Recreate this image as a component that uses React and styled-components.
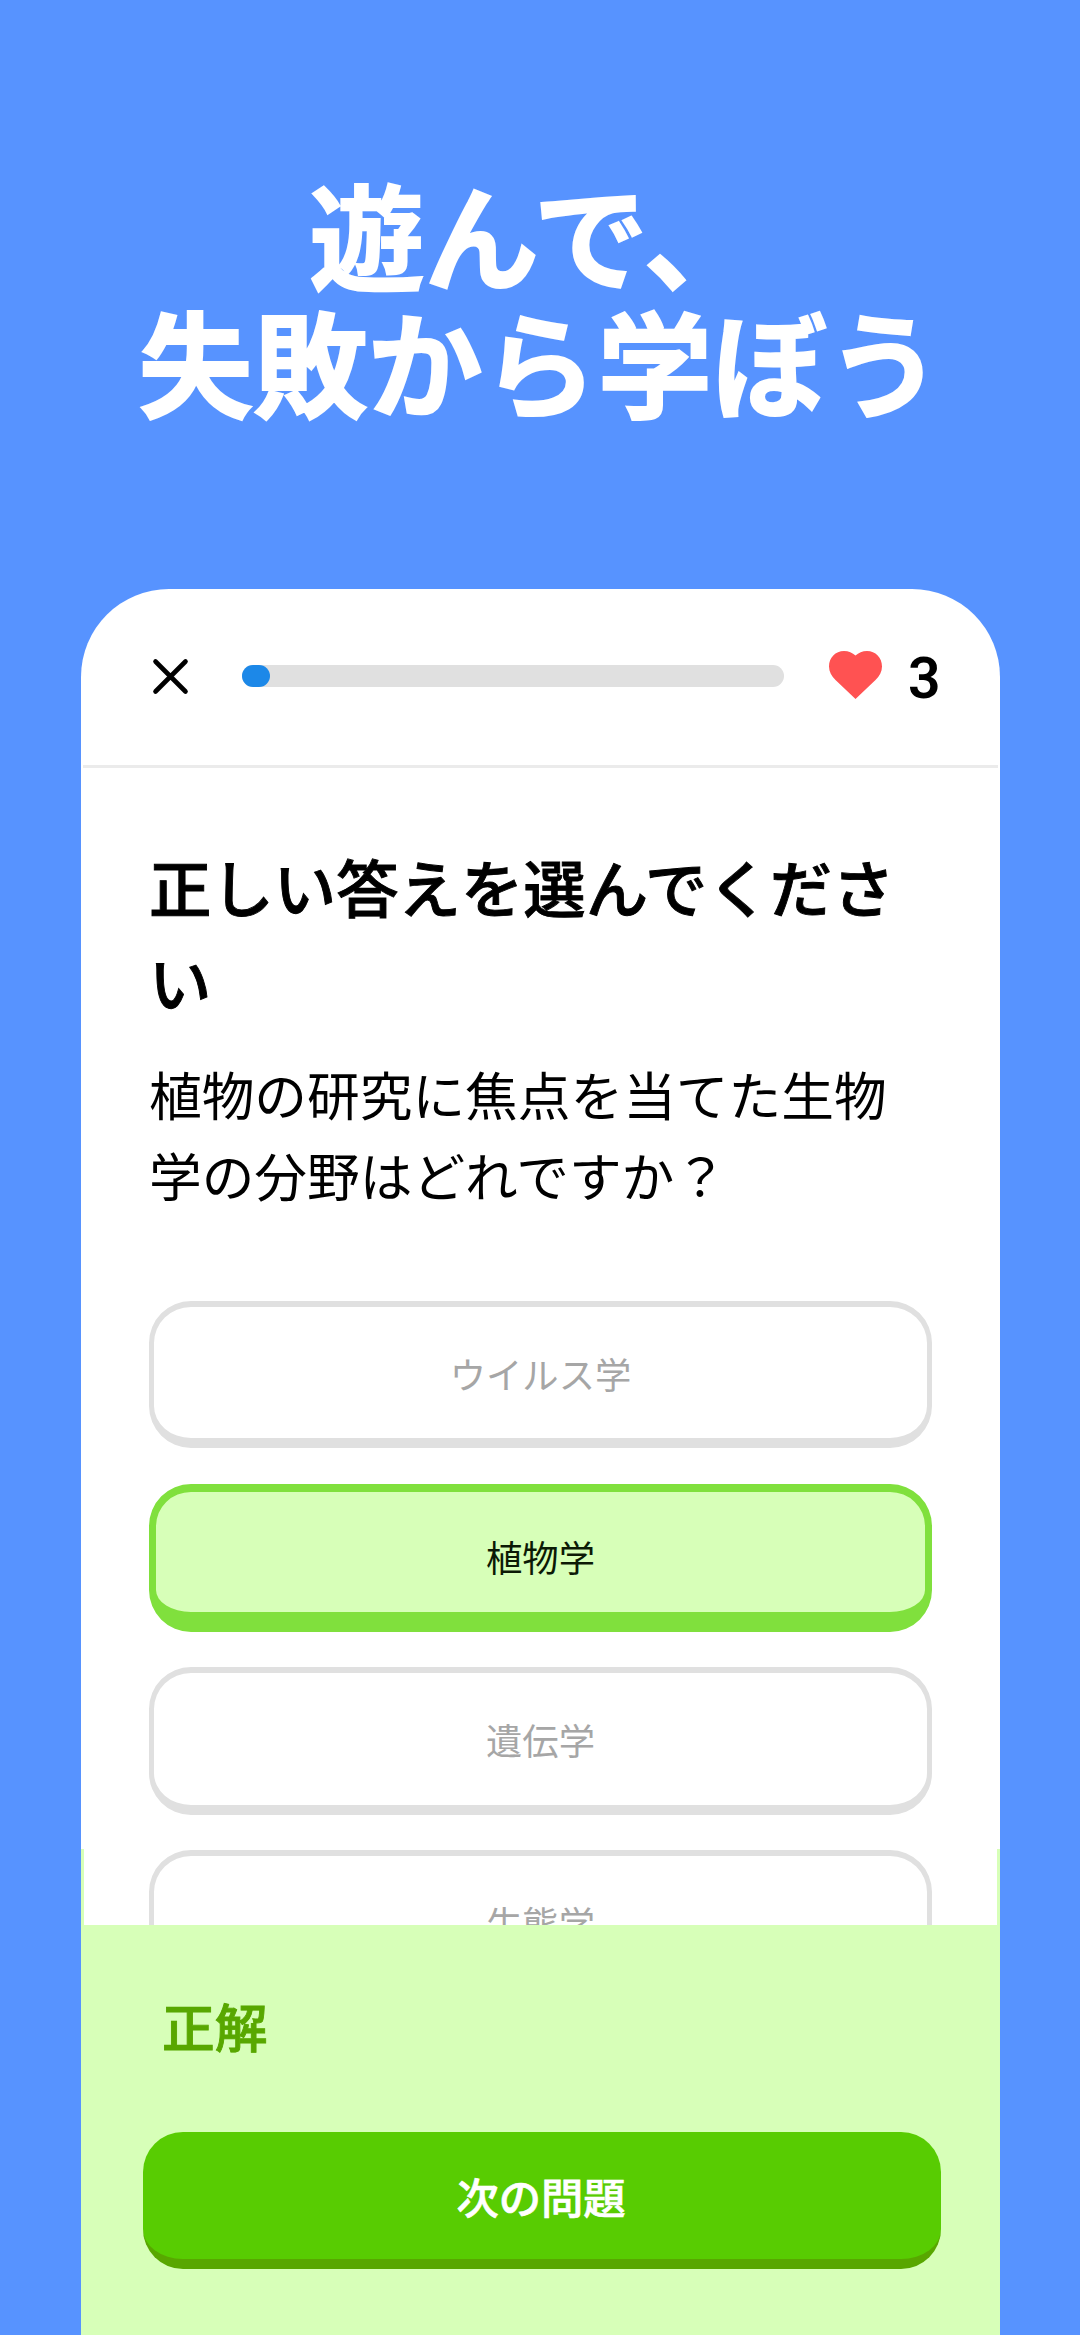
/**
 * Quiz promo screen
 *
 * Headline on a blue backdrop with a quiz sheet below it:
 * - QuizHeader: close button, progress bar and remaining hearts
 * - Question: title and prompt
 * - AnswerOption: one per answer, highlighted when it is the correct one
 * - ResultPanel: feedback message with the "next question" button
 */

import React from 'react';
import styled, { createGlobalStyle, css } from 'styled-components';

const GlobalStyle = createGlobalStyle`
  * {
  box-sizing: border-box;
  }

  body {
  margin: 0;
  background: #5793ff;
  font-family: 'Noto Sans CJK JP', 'Noto Sans', sans-serif;
  color: #000;
  }

  button {
  font-family: inherit;
  color: inherit;
  margin: 0;
  cursor: pointer;
  }
`;

const StyledScreen = styled.main`
  width: 1080px;
  height: 2335px;
  overflow: hidden;
  display: flex;
  flex-direction: column;
  align-items: center;
  background: #5793ff;
`;

const StyledHeadline = styled.h1`
  height: 589px;
  margin: 0;
  padding-top: 169px;
  flex: none;
  color: #fff;
  font-size: 114.8px;
  font-weight: 700;
  line-height: 126.5px;
  text-align: center;
  -webkit-text-stroke: 2px #fff;

  & span {
  display: block;
  }

  & span:first-child {
  padding-right: 12px;
  }
`;

// The green sheet shows through as a thin edge beside the last answers
const StyledSheet = styled.section`
  width: 919px;
  flex: 1;
  min-height: 0;
  display: flex;
  flex-direction: column;
  overflow: hidden;
  margin-left: 1px;
  border-radius: 88px 88px 0 0;
  background: linear-gradient(#fff 1260px, #d7ffb8 1260px);
`;

const StyledQuizHeader = styled.header`
  height: 179px;
  flex: none;
  display: flex;
  align-items: center;
  margin: 0 2px;
  padding: 0 58px 2px 69px;
  border-bottom: 3px solid #ebebeb;
`;

const StyledCloseButton = styled.button`
  width: 37px;
  height: 37px;
  padding: 0;
  border: none;
  background: none;

  & svg {
  display: block;
  }
`;

const StyledProgressTrack = styled.div`
  width: 542px;
  height: 22px;
  flex: none;
  margin-left: 53px;
  border-radius: 11px;
  background: #e0e0e0;
`;

const StyledProgressFill = styled.div`
  height: 100%;
  border-radius: 11px;
  background: #1c88e8;
`;

const StyledHearts = styled.div`
  display: flex;
  align-items: center;
  margin-left: 45px;

  & svg {
  display: block;
  margin-top: -2px;
  }

  & span {
  margin-left: 26px;
  padding-top: 6px;
  font-family: Roboto, sans-serif;
  font-size: 57px;
  font-weight: 600;
  line-height: 60px;
  }
`;

const StyledContent = styled.div`
  height: 1157px;
  flex: none;
  overflow: hidden;
  margin: 0 3px;
  padding: 71px 65px 0;
  background: #fff;
`;

const StyledQuestionTitle = styled.h2`
  margin: 0;
  font-size: 62.4px;
  font-weight: 500;
  line-height: 95px;
  -webkit-text-stroke: 0.9px #000;
`;

const StyledPrompt = styled.p`
  margin: 24px 0 0;
  font-size: 52.7px;
  line-height: 80.7px;
`;

const StyledAnswerList = styled.div`
  display: flex;
  flex-direction: column;
  gap: 35.5px;
  margin-top: 86.3px;
`;

const StyledAnswer = styled.button`
  height: 147.7px;
  flex: none;
  padding: 0;
  border: solid #e0e0e0;
  border-width: 6px 5px 10px;
  border-radius: 42px;
  background: #fff;
  color: #a6a6a6;
  font-size: 36.3px;

  ${({ $correct }) => $correct && css`
  padding-top: 8px;
  border-color: #80e03d;
  border-width: 8px 7px 20px;
  background: #d7ffb8;
  color: #0c1a05;
  `}
`;

const StyledResultPanel = styled.footer`
  flex: 1;
  padding: 60px 59px 0 62px;
  background: #d7ffb8;
`;

const StyledResultMessage = styled.p`
  margin: 0 0 0 19px;
  color: #58a700;
  font-size: 52.7px;
  font-weight: 500;
  line-height: 80px;
  -webkit-text-stroke: 0.9px #58a700;
`;

const StyledNextButton = styled.button`
  display: block;
  width: 100%;
  height: 137px;
  margin-top: 67px;
  padding: 0 2px 0 0;
  border: none;
  border-bottom: 10px solid #58a700;
  border-radius: 40px;
  background: #58cc02;
  color: #fff;
  font-size: 42.3px;
  font-weight: 500;
  -webkit-text-stroke: 0.7px #fff;
`;

const answers = [
  { label: 'ウイルス学' },
  { label: '植物学', correct: true },
  { label: '遺伝学' },
  { label: '生態学' },
];

function CloseIcon() {
  return (
    <svg width="37" height="37" viewBox="0 0 37 37" fill="none" stroke="#000" strokeWidth="4.6" strokeLinecap="round">
      <path d="M3.5 3.5 33.5 33.5M33.5 3.5 3.5 33.5" />
    </svg>
  );
}

function HeartIcon() {
  return (
    <svg width="53" height="48" viewBox="0 0 53 48" fill="#ff5252">
      <path d="M26.5 48 6.500 29C2.500 25 0 20.500 0 15.500 0 6.500 6.500 0 15 0 19.500 0 23.500 1.800 26.500 4.500 29.500 1.800 33.500 0 38 0 46.500 0 53 6.500 53 15.500 53 20.500 50.500 25 46.500 29Z" />
    </svg>
  );
}

function QuizHeader({ progress, hearts }) {
  return (
    <StyledQuizHeader>
      <StyledCloseButton aria-label="閉じる">
        <CloseIcon />
      </StyledCloseButton>
      <StyledProgressTrack>
        <StyledProgressFill style={{ width: `${progress}%` }} />
      </StyledProgressTrack>
      <StyledHearts>
        <HeartIcon />
        <span>{hearts}</span>
      </StyledHearts>
    </StyledQuizHeader>
  );
}

function ResultPanel({ message, action }) {
  return (
    <StyledResultPanel>
      <StyledResultMessage>{message}</StyledResultMessage>
      <StyledNextButton>{action}</StyledNextButton>
    </StyledResultPanel>
  );
}

function App() {
  return (
    <>
      <GlobalStyle />
      <StyledScreen lang="ja">
        <StyledHeadline>
          <span>遊んで、</span>
          <span>失敗から学ぼう</span>
        </StyledHeadline>
        <StyledSheet>
          <QuizHeader progress={5.2} hearts={3} />
          <StyledContent>
            <StyledQuestionTitle>正しい答えを選んでください</StyledQuestionTitle>
            <StyledPrompt>植物の研究に焦点を当てた生物学の分野はどれですか？</StyledPrompt>
            <StyledAnswerList>
              {answers.map(({ label, correct }) => (
                <StyledAnswer key={label} $correct={correct}>{label}</StyledAnswer>
              ))}
            </StyledAnswerList>
          </StyledContent>
          <ResultPanel message="正解" action="次の問題" />
        </StyledSheet>
      </StyledScreen>
    </>
  );
}

export default App;
